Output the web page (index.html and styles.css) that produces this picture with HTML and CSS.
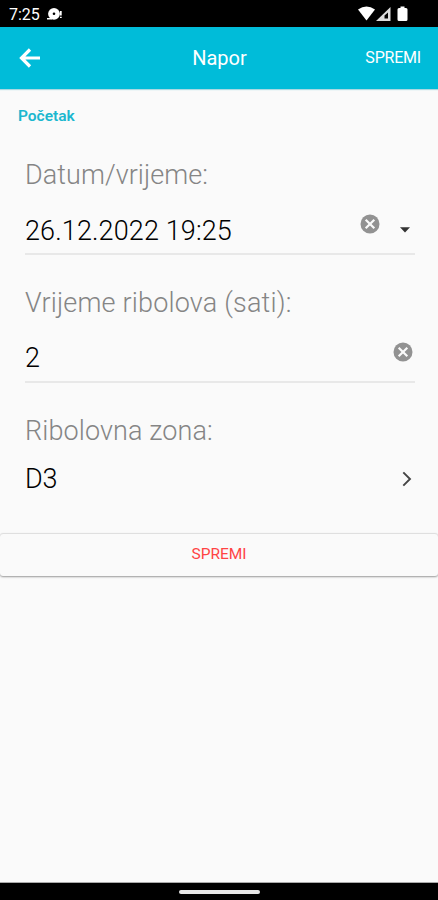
FILE: index.html
```html
<!DOCTYPE html>
<html lang="hr">
<head>
<meta charset="utf-8">
<title>Napor</title>
<link rel="stylesheet" href="styles.css">
</head>
<body>
<div class="status">
  <span class="clock">7:25</span>
  <svg class="notice" width="17" height="14" viewBox="0 0 17 14"><circle cx="7" cy="6.800" r="5.900" fill="#fff"/><circle cx="7" cy="6.800" r="1.300" fill="#000"/><path d="M0 11h5v1.500H0zM13 4h1.700v4.500H13zM13 9.800h1.700V11H13z" fill="#fff"/></svg>
  <svg class="signals" width="52" height="16" viewBox="0 0 52 16"><path d="M1 3.600Q9.500-2.400 18 3.600L9.500 14.500z" fill="#fff"/><path d="M19 15L33.500 1v14z" fill="#ddd"/><path d="M27.500 9.500l3.500-3v6h-3.500z" fill="#000"/><path d="M43.500 .5h4v1.500H49q1.500 0 1.500 1.500v10q0 1.500-1.500 1.500h-7q-1.500 0-1.500-1.500v-10Q40.500 2 42 2h1.500z" fill="#fff"/></svg>
</div>
<header class="bar">
  <svg class="back" width="22" height="22" viewBox="0 0 22 22"><path d="M11 2.500L2.500 11l8.500 8.500M3 11h18" fill="none" stroke="#fff" stroke-width="3.200"/></svg>
  <h1 class="title">Napor</h1>
  <span class="save">SPREMI</span>
</header>
<main class="content">
  <h2 class="section">Početak</h2>
  <section class="field">
    <div class="label label-date">Datum/vrijeme:</div>
    <div class="row">
      <span class="value value-date">26.12.2022 19:25</span>
      <svg class="clear clear-date" width="20" height="20" viewBox="0 0 20 20"><circle cx="10" cy="10" r="9.500" fill="#929292"/><path d="M5.700 5.700l8.600 8.600m0-8.600l-8.600 8.600" stroke="#fafafa" stroke-width="2.200"/></svg>
      <svg class="drop" width="10" height="6" viewBox="0 0 10 6"><path d="M0 .3h10L5 5.500z" fill="#333"/></svg>
    </div>
  </section>
  <section class="field">
    <div class="label label-time">Vrijeme ribolova (sati):</div>
    <div class="row">
      <span class="value">2</span>
      <svg class="clear clear-time" width="20" height="20" viewBox="0 0 20 20"><circle cx="10" cy="10" r="9.500" fill="#929292"/><path d="M5.700 5.700l8.600 8.600m0-8.600l-8.600 8.600" stroke="#fafafa" stroke-width="2.200"/></svg>
    </div>
  </section>
  <section class="field field-zone">
    <div class="label label-zone">Ribolovna zona:</div>
    <div class="row">
      <span class="value value-zone">D3</span>
      <svg class="next" width="10" height="16" viewBox="0 0 10 16"><path d="M1.300 1.300L8 8l-6.700 6.700" fill="none" stroke="#444" stroke-width="1.900"/></svg>
    </div>
  </section>
  <div class="submit">SPREMI</div>
</main>
<footer class="nav"><div class="handle"></div></footer>
</body>
</html>
```

FILE: styles.css
```css
* { box-sizing: border-box; }
body {
  margin: 0;
  height: 900px;
  display: flex;
  flex-direction: column;
  overflow: hidden;
  background: #fafafa;
  font-family: Roboto, sans-serif;
  color: #111;
}
svg { display: block; flex: none; }
.status {
  height: 27px;
  flex: none;
  display: flex;
  padding: 0 29px 0 9px;
  background: #000;
  color: #fff;
}
.clock { width: 38px; font-size: 16px; line-height: 29px; }
.notice { margin-top: 7px; }
.signals { margin: 6px 0 0 auto; }
.bar {
  height: 62px;
  flex: none;
  display: grid;
  grid-template-columns: 1fr auto 1fr;
  align-items: center;
  padding: 0 17px 0 19px;
  background: #00bcd9;
  box-shadow: 0 1px 1px #a9d9e2;
  color: #fff;
}
.back { margin-top: -1px; }
.title { margin: 0 1px 0 0; font-size: 20px; font-weight: 400; }
.save { justify-self: end; margin-top: -1px; font-size: 16px; letter-spacing: -0.2px; }
.content { flex: 1; }
.section {
  margin: 0;
  height: 60px;
  padding: 17px 0 0 18px;
  font-size: 15.5px;
  font-weight: 600;
  line-height: 20px;
  color: #1bb7cf;
}
.field {
  height: 128px;
  margin: 0 23px 0 25px;
  padding-top: 10px;
}
.label {
  height: 32px;
  font-size: 27px;
  font-weight: 300;
  line-height: 32px;
  color: #858585;
  white-space: nowrap;
}
.label-date { letter-spacing: 0.05px; }
.label-time { letter-spacing: 0.18px; }
.label-zone { letter-spacing: 0.1px; }
.row { display: flex; height: 64px; border-bottom: 2px solid #e8e8e8; }
.value {
  flex: 1;
  padding-top: 23px;
  font-size: 27px;
  font-weight: 300;
  line-height: 32px;
  color: #000;
}
.value-date { padding-top: 24px; letter-spacing: 0.13px; }
.value-zone { letter-spacing: -0.3px; }
.clear-date { margin: 23px 20px 0 0; }
.drop { margin: 36px 5px 0 0; }
.clear-time { margin: 23px 2px 0 0; }
.field-zone { height: 129px; }
.field-zone .row { border: 0; }
.field-zone .value { padding-top: 16px; }
.next { margin: 24px 3px 0 0; }
.submit {
  height: 42px;
  border-radius: 3px;
  box-shadow: 0 -1px 1px #ddd, 0 1px 2px #999;
  color: #f44;
  font-size: 15.5px;
  line-height: 41px;
  text-align: center;
}
.nav {
  height: 17px;
  flex: none;
  display: flex;
  justify-content: center;
  padding-top: 7px;
  background: #000;
  box-shadow: 0 -1px 0 #aaa;
}
.handle { width: 81px; height: 4px; border-radius: 2px; background: #e8e8e8; }
```
